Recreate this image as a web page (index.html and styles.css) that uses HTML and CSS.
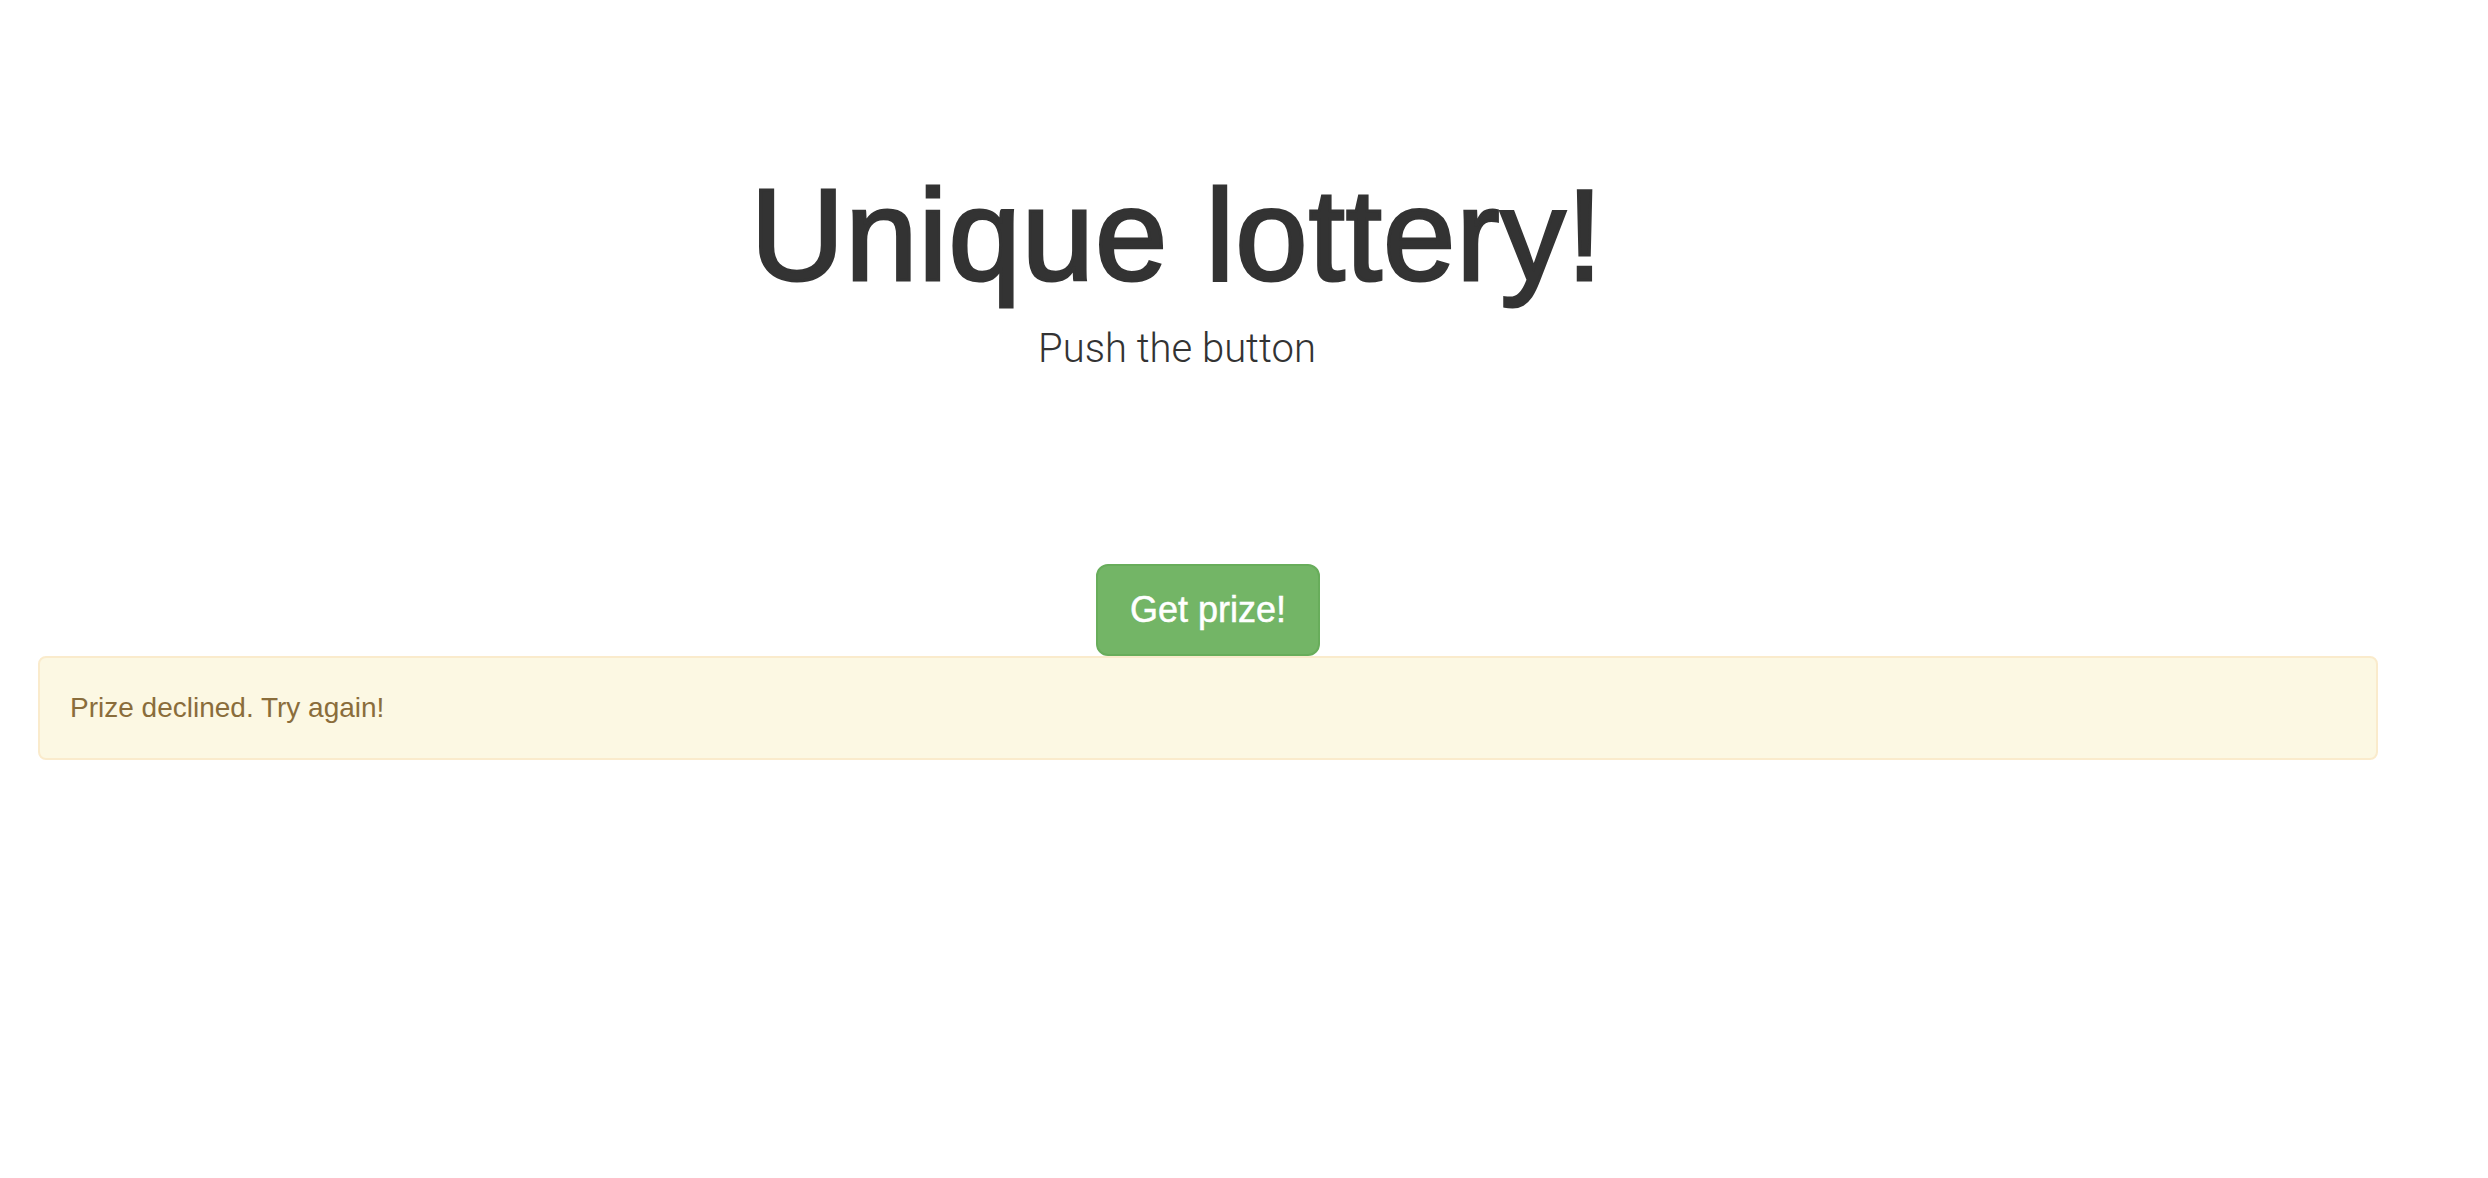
FILE: index.html
```html
<!DOCTYPE html>
<html>
<head>
<meta charset="utf-8">
<link rel="stylesheet" href="styles.css">
</head>
<body>
  <header class="hero">
    <h1 class="hero-title">Unique lottery!</h1>
    <p class="hero-lead">Push the button</p>
  </header>
  <main class="container">
    <div class="actions">
      <button class="btn-prize" type="button">Get prize!</button>
    </div>
    <div class="alert-warning">Prize declined. Try again!</div>
  </main>
</body>
</html>
```

FILE: styles.css
```css
html, body {
  margin: 0;
  padding: 0;
  background: #ffffff;
}

body {
  font-family: "Liberation Sans", Arial, sans-serif;
  color: #333333;
}

.hero {
  width: 2354px;
  padding-top: 164px;
  text-align: center;
}

.hero-title {
  margin: 0;
  font-family: "Liberation Sans", Arial, sans-serif;
  font-size: 130px;
  line-height: 143px;
  font-weight: 400;
  letter-spacing: 1px;
  color: #333333;
  -webkit-text-stroke: 3px #333333;
}

.hero-lead {
  margin: 12px 0 0;
  font-family: Roboto, "Liberation Sans", sans-serif;
  font-size: 40px;
  line-height: 60px;
  font-weight: 300;
  color: #333333;
}

.container {
  width: 2340px;
  margin-left: 38px;
  padding-top: 185px;
}

.actions {
  display: flex;
  justify-content: center;
}

.btn-prize {
  font-family: "Liberation Sans", Arial, sans-serif;
  font-size: 36px;
  line-height: 48px;
  padding: 20px 32px;
  color: #ffffff;
  background: #73b566;
  border: 2px solid #68ad5b;
  border-radius: 12px;
  -webkit-text-stroke: 0.5px #ffffff;
  cursor: pointer;
}

.alert-warning {
  font-family: "Liberation Sans", Arial, sans-serif;
  font-size: 28px;
  line-height: 40px;
  padding: 30px;
  color: #8a6d3b;
  background: #fcf8e3;
  border: 2px solid #faebcc;
  border-radius: 8px;
}
```
